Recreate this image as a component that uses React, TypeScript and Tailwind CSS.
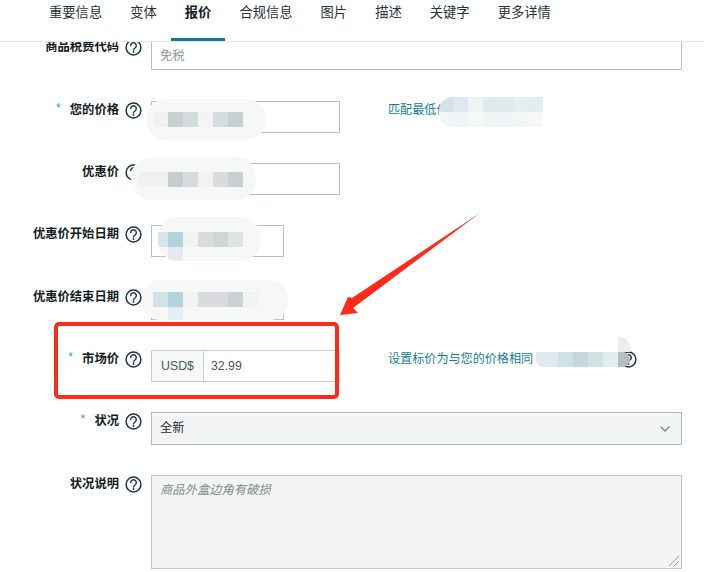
import React from "react";
import { ChevronDown } from "lucide-react";

const tabs = ["重要信息", "变体", "报价", "合规信息", "图片", "描述", "关键字", "更多详情"];

function Help() {
  return (
    <svg width="17" height="17" viewBox="0 0 17 17" fill="none" className="shrink-0 mt-[1px]">
      <circle cx="8.5" cy="8.5" r="7.4" stroke="#173640" strokeWidth="1.5" />
      <path d="M5.7 6.6a2.8 2.8 0 1 1 4.3 2.4c-1 .6-1.5 1-1.5 2" stroke="#173640" strokeWidth="1.4" strokeLinecap="round" />
      <circle cx="8.5" cy="13" r=".9" fill="#173640" />
    </svg>
  );
}

function Row({ label, req, cls, children }: { label: string; req?: boolean; cls: string; children: React.ReactNode }) {
  return (
    <div className={`flex items-start ${cls}`}>
      <div className="w-[119px] shrink-0 pt-[1px] whitespace-nowrap text-right text-[12.3px] leading-[16px] font-bold text-[#111c24]">
        {req && <span className="relative -top-[2px] mr-[9px] font-normal text-[#2aa8b8]">*</span>}
        {label}
      </div>
      <div className="ml-[6px] mr-[9px] flex"><Help /></div>
      {children}
    </div>
  );
}

function Box({ w }: { w: string }) {
  return <div className={`h-[32px] ${w} border border-[#b6c2c1] bg-white`} />;
}

function Link({ children }: { children: React.ReactNode }) {
  return <div className="ml-[48px] mt-[1px] whitespace-nowrap text-[12.1px] leading-[16px] text-[#0f7f92]">{children}</div>;
}

function Cell({ c, w = "w-[15px]" }: { c: string; w?: string }) {
  return <div className={`h-[15px] shrink-0 ${w} ${c}`} />;
}

export default function App() {
  return (
    <div className="relative w-[704px] h-[572px] overflow-hidden bg-white font-['Liberation_Sans','Noto_Sans_CJK_SC',sans-serif]">
      <nav className="relative z-10 flex h-[42px] border-b border-[#e6e8e8] bg-white pl-[35px]">
        {tabs.map((t) => (
          <div
            key={t}
            className={
              t === "报价"
                ? "h-[41px] px-[14px] pt-[4px] text-[13.3px] leading-[18px] font-bold text-[#111c24] border-b-[3px] border-[#0b7f8e]"
                : "h-[41px] px-[14px] pt-[4px] text-[13.3px] leading-[18px] text-[#26333b]"
            }
          >
            {t}
          </div>
        ))}
      </nav>

      <Row label="商品税费代码" cls="-mt-[4px]">
        <div className="h-[32px] w-[531px] border border-[#b6c2c1] px-[8px] pt-[9px] text-[12.3px] leading-[16px] text-[#8c9797]">免税</div>
      </Row>
      <Row label="您的价格" req cls="mt-[31px]"><Box w="w-[189px]" /><Link>匹配最低价</Link></Row>
      <Row label="优惠价" cls="mt-[30px]"><Box w="w-[189px]" /></Row>
      <Row label="优惠价开始日期" cls="mt-[30px]"><Box w="w-[133px]" /></Row>
      <Row label="优惠价结束日期" cls="mt-[31px]"><Box w="w-[133px]" /></Row>
      <Row label="市场价" req cls="mt-[30px]">
        <div className="flex h-[32px] w-[189px] border border-[#c4cfce] text-[12.3px] leading-[30px] text-[#44565f]">
          <div className="w-[52px] shrink-0 border-r border-[#c4cfce] bg-[#f7f8f8] text-center">USD$</div>
          <div className="pl-[7px]">32.99</div>
        </div>
        <Link>设置标价为与您的价格相同</Link>
        <div className="ml-[87px]"><Help /></div>
      </Row>
      <Row label="状况" req cls="mt-[30px]">
        <div className="flex h-[33px] w-[531px] items-center justify-between border border-[#aebcb9] bg-[#f3f5f5] px-[8px] text-[12.3px] text-[#1d2b33]">
          <span>全新</span>
          <ChevronDown size={16} strokeWidth={2.4} className="text-[#7f8f8f]" />
        </div>
      </Row>
      <Row label="状况说明" cls="mt-[30px]">
        <div className="relative h-[94px] w-[531px] border border-[#c0cbc9] bg-[#f3f5f5] px-[8px] pt-[6px] text-[12.3px] leading-[16px] italic text-[#7f8a8a]">
          商品外盒边角有破损
          <svg width="12" height="12" viewBox="0 0 12 12" className="absolute bottom-[1px] right-[1px]">
            <path d="M1 11 11 1M6 11l5-5" stroke="#8f9a9a" strokeWidth="1" />
          </svg>
        </div>
      </Row>

      {/* redaction mosaics over the form */}
      <div className="absolute left-[146px] top-[99px] h-[41px] w-[120px] rounded-[20px] bg-[#f6f8f8]">
        <div className="mt-[13px] ml-[7px] flex">
          <Cell c="bg-[#f0f2f2]" /><Cell c="bg-[#c8d0d1]" /><Cell c="bg-[#d5dbdc]" /><Cell c="bg-[#f3f4f3]" /><Cell c="bg-[#d5dcde]" /><Cell c="bg-[#c9d0d2]" />
        </div>
      </div>
      <div className="absolute left-[131px] top-[157px] h-[43px] w-[125px] rounded-[20px] bg-[#f6f8f8]">
        <div className="mt-[15px] ml-[7px] flex">
          <Cell c="bg-[#f0f2f2]" w="w-[30px]" /><Cell c="bg-[#c8ced0]" /><Cell c="bg-[#d6dbdc]" /><Cell c="bg-[#f2f2f1]" /><Cell c="bg-[#d7dddf]" /><Cell c="bg-[#c9cfd2]" />
        </div>
      </div>
      <div className="absolute left-[158px] top-[217px] h-[44px] w-[102px] overflow-hidden rounded-[20px] bg-[#f6f8f8]">
        <div className="mt-[15px] flex">
          <Cell c="bg-[#d5e5e9]" w="w-[10px]" /><Cell c="bg-[#b3d3da]" /><Cell c="bg-[#f1f3f3]" /><Cell c="bg-[#d8dcde]" /><Cell c="bg-[#d0d6d8]" /><Cell c="bg-[#e0e3e5]" />
        </div>
        <div className="ml-[10px] flex"><Cell c="bg-[#e2ecee]" /></div>
      </div>
      <div className="absolute left-[142px] top-[280px] h-[40px] w-[146px] overflow-hidden rounded-[18px] bg-[#f6f8f8]">
        <div className="mt-[12px] ml-[11px] flex">
          <Cell c="bg-[#cfe3e8]" /><Cell c="bg-[#b3d3da]" /><Cell c="bg-[#f1f3f3]" /><Cell c="bg-[#d8dcde]" w="w-[30px]" /><Cell c="bg-[#cbd2d4]" /><Cell c="bg-[#f1f3f5]" />
        </div>
        <div className="ml-[26px] flex"><Cell c="bg-[#e3eef0]" /></div>
      </div>
      <div className="absolute left-[439px] top-[97px] h-[30px] w-[104px] overflow-hidden rounded-l-[14px]">
        <div className="flex">
          <Cell c="bg-[#d3e2e9]" w="w-[14px]" /><Cell c="bg-[#dde9ee]" /><Cell c="bg-[#eef3f3]" /><Cell c="bg-[#dfeaee]" w="w-[30px]" /><Cell c="bg-[#e6eef0]" /><Cell c="bg-[#e3edf1]" />
        </div>
        <div className="flex">
          <Cell c="bg-[#f0f5f6]" w="w-[14px]" /><Cell c="bg-[#f0f5f6]" /><Cell c="bg-[#f5f8f9]" /><Cell c="bg-[#f0f5f6]" w="w-[30px]" /><Cell c="bg-[#f2f6f7]" /><Cell c="bg-[#f6f9fa]" />
        </div>
      </div>
      <div className="absolute left-[536px] top-[337px] w-[94px]">
        <div className="ml-[82px] h-[15px] w-[12px] rounded-tr-[10px] bg-[#e9eef0]" />
        <div className="flex overflow-hidden rounded-r-[8px] rounded-bl-[8px]">
          <Cell c="bg-[#dfeaee]" w="w-[22px]" /><Cell c="bg-[#cde2e6]" /><Cell c="bg-[#c5d7db]" /><Cell c="bg-[#cfe2e6]" /><Cell c="bg-[#e3edef]" /><Cell c="bg-[#b5bfc0]" w="w-[12px]" />
        </div>
      </div>

      {/* red annotation */}
      <div className="absolute left-[54px] top-[322px] h-[77px] w-[285px] rounded-[5px] border-[4px] border-[#ff2a1a]" />
      <svg width="704" height="572" className="absolute left-0 top-0 pointer-events-none">
        <polygon points="480,213 352,298 348,297 340,315 358,313 353,308" fill="#ff2a1a" />
      </svg>
    </div>
  );
}
